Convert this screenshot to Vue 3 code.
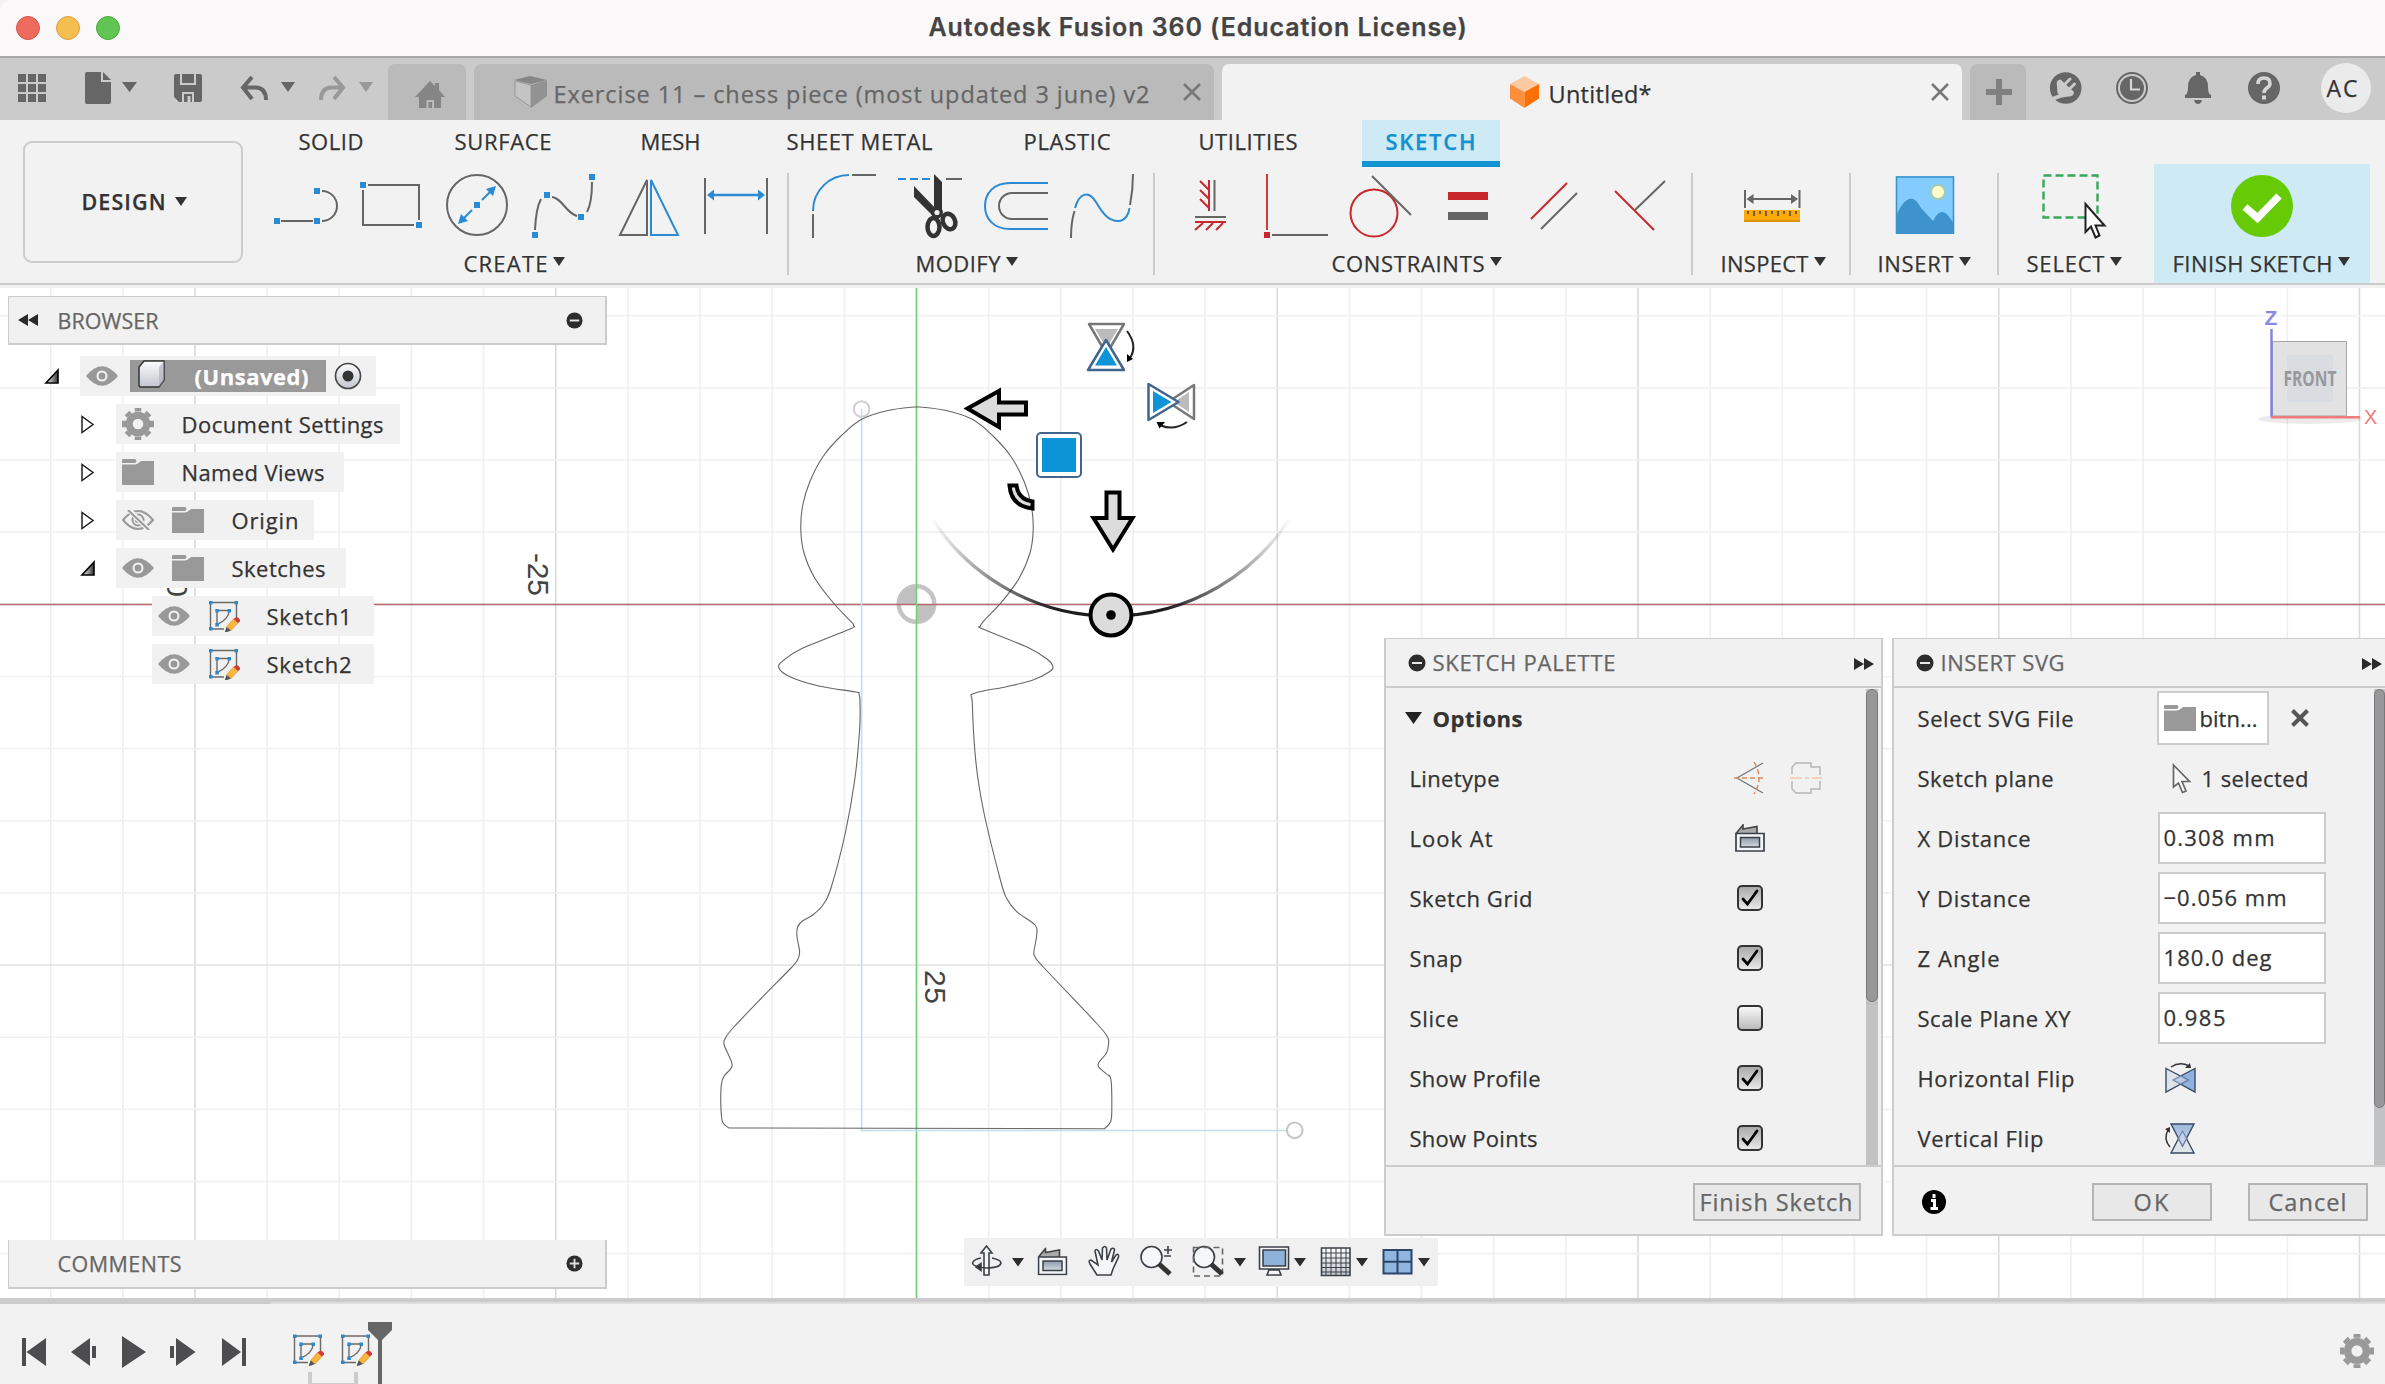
<script setup>
const vFit = {
  mounted(el, { value }) {
    el.style.letterSpacing = '0px'
    el.style.width = 'auto'
    const natural = el.getBoundingClientRect().width
    const gaps = Math.max(1, el.textContent.trim().length - 1)
    el.style.letterSpacing = (value + 2 - natural) / gaps + 'px'
    el.style.textIndent = '-1.5px'
    el.style.width = value + 'px'
  },
}

const ribbonTabs = [
  { t: 'SOLID', w: 63, gap: 10 },
  { t: 'SURFACE', w: 95, gap: 45 },
  { t: 'MESH', w: 58, gap: 43 },
  { t: 'SHEET METAL', w: 144, gap: 40 },
  { t: 'PLASTIC', w: 85, gap: 45 },
  { t: 'UTILITIES', w: 97, gap: 42 },
  { t: 'SKETCH', w: 88, gap: 41, on: true },
]

const G = '#666'
const B = '#2a8ad4'
const R = '#c8282c'
const sq = (x, y, c = B) => `<rect x="${x - 3}" y="${y - 3}" width="6" height="6" fill="${c}"/>`
const ln = (d, c = G, w = 2) => `<path d="${d}" fill="none" stroke="${c}" stroke-width="${w}"/>`

const groups = [
  {
    x0: 266, x1: 789, label: 'CREATE', lx: 465, lw: 82,
    icons: [
      { x: 266, w: 84, c: ln('M281 221H313M322 191A15 15 0 0 1 322 221') + sq(277, 221) + sq(317, 221) + sq(317, 191) },
      { x: 350, w: 84, c: ln('M368 185H419V220M414 225H363V190') + sq(363, 185) + sq(419, 225) },
      { x: 434, w: 84, c: `<circle cx="477" cy="205" r="30" fill="none" stroke="${G}" stroke-width="2"/>` + ln('M482 200L490 192M472 210L464 218', B) + `<path d="M496 186l-3 10-7-7zM458 224l3-10 7 7z" fill="${B}"/>` + sq(477, 205) },
      { x: 518, w: 90, c: ln('M535 230Q536 208 541 199M552 197C562 198 566 213 577 216M587 212Q592 203 592 182') + sq(547, 195) + sq(592, 177) + sq(581, 217) + sq(535, 235) },
      { x: 608, w: 82, c: ln('M647 180V235H620Z') + ln('M651 180V235H678Z', B) },
      { x: 690, w: 90, c: ln('M705 178V234M767 178V234') + ln('M712 195H760', B, 2.4) + `<path d="M707 195l7-5.500v11zM765 195l-7-5.500v11z" fill="${B}"/>` },
    ],
  },
  {
    x0: 789, x1: 1155, label: 'MODIFY', lx: 917, lw: 83,
    icons: [
      { x: 789, w: 98, c: ln('M813 211C813 190 830 175 849 175', B) + ln('M852 175H876M813 214V238') },
      { x: 887, w: 86, c: ln('M898 179H906M910 179H918M922 179H930', B) + ln('M946 179H962') + '<path d="M934 174l8 8v30l-8 2zM914 186v11l18 18 5-5z" fill="#333"/><ellipse cx="933.500" cy="227" rx="6" ry="9" fill="none" stroke="#333" stroke-width="4.500"/><ellipse cx="949" cy="221.500" rx="6" ry="8" transform="rotate(-25 949 221.500)" fill="none" stroke="#333" stroke-width="4.500"/><circle cx="937" cy="212.500" r="6" fill="#333"/><circle cx="937" cy="212.500" r="2.600" fill="#f2f2f2"/>' },
      { x: 973, w: 88, c: ln('M1048 183H1010C994 183 985 193 985 206S994 229 1010 229H1048', B) + ln('M1048 193H1012A13 13 0 0 0 1012 219H1048') },
      { x: 1061, w: 84, c: ln('M1071 238Q1071 222 1074.500 211M1130 205Q1133 190 1133 174') + ln('M1075 208C1079 194 1088 189 1096 202C1104 216 1110 221 1118 221C1126 221 1129 213 1129.500 208', B) },
    ],
  },
  {
    x0: 1155, x1: 1693, label: 'CONSTRAINTS', lx: 1333, lw: 151,
    icons: [
      { x: 1155, w: 90, c: ln('M1209 180V211M1200 181L1209 190M1200 190L1209 199M1200 199L1209 208M1195 222H1226M1203 223L1195 230M1213 223L1206 230M1223 223L1216 230', R) + ln('M1214.500 180V211M1195 217H1226') },
      { x: 1245, w: 94, c: ln('M1267 174V230', R, 1.8) + sq(1267, 235, R) + ln('M1272 235H1328') },
      { x: 1339, w: 92, c: `<circle cx="1374" cy="213" r="23.500" fill="none" stroke="${R}" stroke-width="2"/>` + ln('M1372 176L1411 215') },
      { x: 1431, w: 86, c: `<path d="M1448 192h40v8h-40z" fill="${R}"/><path d="M1448 212h40v8h-40z" fill="${G}"/>` },
      { x: 1517, w: 84, c: ln('M1531 219L1567 183', R) + ln('M1541 229L1577 193') },
      { x: 1601, w: 80, c: ln('M1615 191L1654 230', R) + ln('M1635 210L1665 181') },
    ],
  },
  {
    x0: 1693, x1: 1851, label: 'INSPECT', lx: 1722, lw: 86,
    icons: [{ x: 1693, w: 150, c: ln('M1745 190V208M1799.500 190V208M1752 199H1793') + `<path d="M1746.500 199l7-5v10zM1798 199l-7-5v10z" fill="${G}"/><path d="M1744 210h56v12h-56z" fill="#fca90b"/><path d="M1744 220h56v2h-56z" fill="#d9920a"/>` + ln('M1748 211V214M1754 211V216M1760 211V214M1766 211V216M1772 211V214M1778 211V216M1784 211V214M1790 211V216M1796 211V214', '#444', 1.5) }],
  },
  {
    x0: 1851, x1: 1999, label: 'INSERT', lx: 1879, lw: 74,
    icons: [{ x: 1851, w: 140, c: '<path d="M1896 176h58v58h-58z" fill="#83ccff"/><circle cx="1938" cy="192" r="7" fill="#ffffcf" stroke="#a9c9b0" stroke-width="2"/><path d="M1896 216C1904 198 1913 192 1921 208L1933 221C1940 207 1946 210 1954 224V234H1896Z" fill="#3e93cc"/><path d="M1896.500 177h57v56h-57z" fill="none" stroke="#3e93cc" stroke-width="1.600"/>' }],
  },
  {
    x0: 1999, x1: 2154, label: 'SELECT', lx: 2028, lw: 76,
    icons: [{ x: 1999, w: 140, c: '<path d="M2043.500 175.500h54v42h-54z" fill="none" stroke="#35a85a" stroke-width="2.400" stroke-dasharray="8 4"/><path d="M2085.500 204V232L2091 226.500L2095.500 237.500L2099.500 235.500L2095.500 225.500H2104.500Z" fill="#fff" stroke="#222" stroke-width="2"/>' }],
  },
  {
    x0: 2154, x1: 2370, label: 'FINISH SKETCH', lx: 2174, lw: 158, done: true,
    icons: [{ x: 2154, w: 216, c: '<circle cx="2262" cy="206" r="31" fill="#66cb06"/><path d="M2245 207L2257.500 218L2279 196" fill="none" stroke="#fff" stroke-width="7.500"/>' }],
  },
]

const tree = [
  { t: '(Unsaved)', w: 112, kind: 'root', open: true, row: 296 },
  { t: 'Document Settings', w: 200, kind: 'gear', row: 284 },
  { t: 'Named Views', w: 141, kind: 'folder', row: 228 },
  { t: 'Origin', w: 65, kind: 'folder', eye: 'eye-off', row: 198 },
  { t: 'Sketches', w: 92, kind: 'folder', eye: 'eye', open: true, row: 230 },
  { t: 'Sketch1', w: 83, kind: 'sketch', eye: 'eye', row: 222 },
  { t: 'Sketch2', w: 83, kind: 'sketch', eye: 'eye', row: 222 },
]

const options = [
  { t: 'Linetype', w: 88, kind: 'line' },
  { t: 'Look At', w: 81, kind: 'look' },
  { t: 'Sketch Grid', w: 121, on: true },
  { t: 'Snap', w: 51, on: true },
  { t: 'Slice', w: 47, on: false },
  { t: 'Show Profile', w: 129, on: true },
  { t: 'Show Points', w: 126, on: true },
]

const fields = [
  { t: 'Select SVG File', w: 154, kind: 'file' },
  { t: 'Sketch plane', w: 134, kind: 'plane' },
  { t: 'X Distance', w: 111, v: '0.308 mm', vw: 109 },
  { t: 'Y Distance', w: 111, v: '−0.056 mm', vw: 121 },
  { t: 'Z Angle', w: 80, v: '180.0 deg', vw: 106 },
  { t: 'Scale Plane XY', w: 151, v: '0.985', vw: 60 },
  { t: 'Horizontal Flip', w: 155, kind: 'hflip' },
  { t: 'Vertical Flip', w: 124, kind: 'vflip' },
]

const STEP = 72.15
const cols = Array.from({ length: 34 }, (_, i) => i - 12).map((k) => ({ p: 916.5 + k * STEP, major: k % 5 === 0 }))
const rows = Array.from({ length: 14 }, (_, i) => i - 4).map((k) => ({ p: 604.3 + k * STEP, major: k % 5 === 0 }))

function smooth(pts) {
  let d = ''
  for (let i = 0; i < pts.length - 1; i++) {
    const a = pts[i - 1] || pts[i]
    const b = pts[i]
    const c = pts[i + 1]
    const e = pts[i + 2] || c
    d += `C${b[0] + (c[0] - a[0]) / 6} ${b[1] + (c[1] - a[1]) / 6} ${c[0] - (e[0] - b[0]) / 6} ${c[1] - (e[1] - b[1]) / 6} ${c[0]} ${c[1]}`
  }
  return d
}
const head = [[917, 406.700], [888, 410.500], [861.600, 419.300], [841, 436], [822.900, 456.700], [809.800, 481.700], [802.600, 506], [800.800, 530], [804, 553], [814.700, 578]]
const left = [...head, [833, 602.5], [851, 621.700], [853.500, 625.500], [849.400, 629.300], [802.400, 648.300], [784, 660], [778.800, 667.700], [790, 676.700], [818.800, 686], [855.500, 692], [859, 694], [860, 703], [859.600, 730], [854.700, 780], [845.300, 833], [831, 888], [822.900, 905], [812.700, 915], [802.400, 921], [797.600, 927], [797, 936.700], [799.600, 951.700], [797.600, 960], [790, 969], [761.600, 998], [733, 1028], [725.500, 1038], [724.200, 1045], [732.200, 1065], [724.900, 1075], [721.600, 1083], [720.800, 1103], [722.400, 1121.700], [729, 1128]]
const right = [[1104.500, 1128.700], [1110.600, 1121.700], [1111.800, 1110], [1111, 1080], [1106.500, 1074], [1098, 1065], [1106.500, 1053], [1108.600, 1043], [1107.300, 1036.700], [1096.300, 1023], [1043.300, 967], [1035, 956.700], [1033.900, 951.700], [1036.700, 935], [1035, 925], [1016.700, 911.700], [1006.500, 898], [1000.400, 880], [984, 813], [976, 763], [972.300, 703], [974, 693.500], [1006.500, 686.700], [1033, 680], [1049.400, 671.700], [1052.900, 666.700], [1047, 659], [1027, 647], [983, 629], [980.300, 626], [986, 618.500], [1002, 601.700], ...head.map(([x, y]) => [1834 - x, y]).reverse()]
const pawn = `M917 406.700${smooth(left)}L1104.500 1128.700${smooth(right)}Z`
</script>

<template>
  <div class="app">
    <svg class="sprite" width="0" height="0">
      <defs>
        <linearGradient id="gBox" x2="0" y2="1"><stop offset="0" stop-color="#fdfdfd" /><stop offset="1" stop-color="#c2c6d0" /></linearGradient>
        <linearGradient id="gBlue" x2="0" y2="1"><stop offset="0" stop-color="#9db9dd" /><stop offset="1" stop-color="#c9d6ea" /></linearGradient>
        <linearGradient id="gDark" x2="0" y2="1"><stop offset="0" stop-color="#8e99aa" /><stop offset="1" stop-color="#d4d9e0" /></linearGradient>
        <linearGradient id="gTri" x2="1" y2="0"><stop offset="0" stop-color="#fff" /><stop offset="1" stop-color="#333" /></linearGradient>
        <linearGradient id="gArc" x1="933" x2="1289" y1="0" y2="0" gradientUnits="userSpaceOnUse">
          <stop offset="0" stop-color="#222" stop-opacity=".02" /><stop offset=".12" stop-color="#222" stop-opacity=".4" /><stop offset=".35" stop-color="#111" stop-opacity=".95" />
          <stop offset=".65" stop-color="#111" stop-opacity=".95" /><stop offset=".88" stop-color="#222" stop-opacity=".4" /><stop offset="1" stop-color="#222" stop-opacity=".02" />
        </linearGradient>
      </defs>
      <symbol id="eye" viewBox="0 0 32 20"><path d="M0 10Q16-9.500 32 10Q16 29.500 0 10Z" fill="#999" /><circle cx="16" cy="10" r="4.500" fill="none" stroke="#f2f2f2" stroke-width="2" /></symbol>
      <symbol id="eye-off" viewBox="0 0 32 20"><g fill="none" stroke="#999" stroke-width="2"><path d="M1 10Q16-8 31 10Q16 28 1 10Z" /><circle cx="16" cy="10" r="5.500" /><circle cx="16" cy="10" r="2" /><path d="M7 0L27 20" stroke="#f2f2f2" stroke-width="5" /><path d="M6 0L27 20" /></g></symbol>
      <symbol id="folder" viewBox="0 0 32 26"><path d="M0 1Q0 0 1.500 0H12.500Q14.500 0 14.500 2T12.500 4H0ZM0 5.500H13Q15 5.500 17 3.500T20 2H32V26H0Z" fill="#999" /></symbol>
      <symbol id="gear" viewBox="-16 -16 32 32"><path d="M0-12.500V-16M0 12.500V16M-12 0H-16M12 0H16M-8.500-8.500L-11-11M8.500-8.500L11-11M-8.500 8.500L-11 11M8.500 8.500L11 11" stroke="#999" stroke-width="6.500" /><circle r="8.800" fill="none" stroke="#999" stroke-width="7" /></symbol>
      <symbol id="sketch" viewBox="0 0 32 32"><path d="M2.500 2.500H28.500V19M16 29H2.500V2.500M9 10.500H21.500Q20 20 9 24.500Z" fill="none" stroke="#6a6a6a" stroke-width="1.400" /><path d="M1 1h3.500v3.500H1zM26.500 1H30v3.500h-3.500zM1 27h3.500v3.500H1zM7.300 9h3.500v3.500H7.300zM19.500 9H23v3.500h-3.500zM7.300 23h3.500v3.500H7.300z" fill="#2a8ad4" /><path d="M18.500 27L25.500 19L30 23L23 30.500Z" fill="#f6b73c" stroke="#e09a2a" stroke-width=".7" /><path d="M16.500 33L18.500 27L23 30.500Z" fill="#555" /><path d="M25.500 19Q28.500 16 31 18.500T30 23Z" fill="#d23b36" /></symbol>
      <symbol id="look" viewBox="0 0 30 28"><path d="M1 9.500L8 1V5L22 2.500V9.500" fill="#aaa" stroke="#444" stroke-width="1.600" /><path d="M1 9.500H29V27H1Z" fill="#f4f6fa" stroke="#3a4048" stroke-width="1.700" /><path d="M5.500 13.500H24.500V23H5.500Z" fill="url(#gDark)" stroke="#3a4048" stroke-width="1.500" /></symbol>
      <symbol id="ff" viewBox="0 0 20 12"><path d="M0 0L10 6L0 12ZM10 0L20 6L10 12Z" fill="#2b2b2b" /></symbol>
      <symbol id="tri" viewBox="0 0 12 9"><path d="M0 0H12L6 9Z" fill="currentColor" /></symbol>
      <symbol id="minus" viewBox="0 0 18 18"><circle cx="9" cy="9" r="8.500" fill="#2d2d2d" /><path d="M4 9H14" stroke="#e8e8e8" stroke-width="2" /></symbol>
      <symbol id="close" viewBox="0 0 18 18"><path d="M1 1L17 17M17 1L1 17" stroke="currentColor" stroke-width="2.500" /></symbol>
    </svg>

    <header class="title">
      <i class="light red"></i><i class="light amber"></i><i class="light green"></i>
      <b v-fit="536">Autodesk Fusion 360 (Education License)</b>
    </header>

    <nav class="docbar">
      <svg class="quick" width="388" height="62" viewBox="0 58 388 62">
        <path d="M18 74h8v8h-8zM28 74h8v8h-8zM38 74h8v8h-8zM18 84h8v8h-8zM28 84h8v8h-8zM38 84h8v8h-8zM18 94h8v8h-8zM28 94h8v8h-8zM38 94h8v8h-8z" fill="#666" />
        <path d="M87 72h14v10h10v20q0 2-2 2H87q-2 0-2-2V74q0-2 2-2zM103 72l8 8h-8z" fill="#666" />
        <path d="M122 82h15l-7.500 10zM281 82h14l-7 10z" fill="#666" /><path d="M359 82h14l-7 10z" fill="#999" />
        <path d="M176 74h24q2 0 2 2v24q0 2-2 2h-21l-5-5V76q0-2 2-2z" fill="#666" /><path d="M181 74v10h14V74M183 102v-9h10v9" fill="none" stroke="#cbcbcb" stroke-width="2" /><path d="M187.500 96h3v6h-3z" fill="#cbcbcb" />
        <path d="M252 77L243 87.500L252 99M244 87.500H256Q266 88 266 100" fill="none" stroke="#666" stroke-width="4" />
        <path d="M334 77L343 87.500L334 99M342 87.500H331Q321 88 321 100" fill="none" stroke="#999" stroke-width="4" />
      </svg>
      <div class="tab home"><svg width="32" height="28" viewBox="0 0 32 28"><path d="M16 0L21 5V2H25V9L31 16H27V27H20V19H12.500V27H5V16H1ZM14.500 21H18V27H14.500Z" fill="#858585" /></svg></div>
      <div class="tab doc">
        <svg width="33" height="32" viewBox="0 0 33 32"><path d="M0 4L16 0L33 4L17 8Z" fill="#868686" /><path d="M1 5L17 9V31L1 20Z" fill="#c4c4c4" stroke="#999" /><path d="M17 9L33 4V20L17 32Z" fill="#929292" /></svg>
        <span v-fit="594" class="doc-name">Exercise 11 – chess piece (most updated 3 june) v2</span>
        <svg class="x" width="18" height="18"><use href="#close" /></svg>
      </div>
      <div class="tab active">
        <svg width="29" height="32" viewBox="0 0 29 32"><path d="M14.500 0L29 8L14.500 16L0 8Z" fill="#fdc9a0" /><path d="M0 8L14.500 16V32L0 22.500Z" fill="#fb8f3c" /><path d="M29 8L14.500 16V32L29 22.500Z" fill="#fb6f05" /></svg>
        <span v-fit="101" class="doc-name">Untitled*</span>
        <svg class="x" width="18" height="18"><use href="#close" /></svg>
      </div>
      <div class="tab plus"><svg width="26" height="26" viewBox="0 0 26 26"><path d="M13 0V26M0 13H26" stroke="#808080" stroke-width="6" /></svg></div>
      <svg class="status" width="290" height="62" viewBox="2030 58 290 62">
        <circle cx="2065.700" cy="88" r="15.800" fill="#666" />
        <path d="M2064 94.500L2051 99.500" stroke="#cbcbcb" stroke-width="4" /><path d="M2057 86Q2055.500 80 2060.500 79.500L2074 92Q2073.500 97 2068 96.500L2062 97.500L2057.500 93Z" fill="#cbcbcb" /><path d="M2065 84L2070 79M2070 88.500L2074.500 84" stroke="#cbcbcb" stroke-width="3" stroke-linecap="round" />
        <circle cx="2132" cy="88" r="15" fill="none" stroke="#666" stroke-width="2" /><circle cx="2132" cy="88" r="12" fill="#666" /><path d="M2131 79V89.500H2140" fill="none" stroke="#d6d6d6" stroke-width="2.200" />
        <path d="M2196 72h4v3q8 2 8 12q0 7 3 8v3h-26v-3q3-1 3-8q0-10 8-12zM2194 100h8q-1 4-4 4t-4-4z" fill="#666" />
        <circle cx="2264" cy="88" r="16" fill="#666" /><path d="M2258 84Q2258 78 2264 78T2270 83.500Q2270 86 2267 88T2264 93" fill="none" stroke="#d6d6d6" stroke-width="3.600" /><path d="M2262 95.500h4v4h-4z" fill="#d6d6d6" />
      </svg>
      <div class="avatar"><span v-fit="29">AC</span></div>
    </nav>

    <section class="ribbon">
      <button class="workspace"><b v-fit="82">DESIGN</b><svg width="12" height="9"><use href="#tri" /></svg></button>
      <div class="tools">
        <div class="ribbon-tabs">
          <span v-for="r in ribbonTabs" :key="r.t" class="rtab" :class="{ on: r.on }" :style="{ marginLeft: r.gap + 'px' }"><span v-fit="r.w">{{ r.t }}</span></span>
        </div>
        <div class="groups">
          <div v-for="g in groups" :key="g.label" class="group" :class="{ done: g.done }" :style="{ width: g.x1 - g.x0 + 'px' }">
            <div class="icons">
              <svg v-for="i in g.icons" :key="i.x" :width="i.w" height="68" :viewBox="`${i.x} 172 ${i.w} 68`" v-html="i.c"></svg>
            </div>
            <div class="glabel" :style="{ marginLeft: g.lx - g.x0 + 'px' }"><span v-fit="g.lw">{{ g.label }}</span><svg width="12" height="9"><use href="#tri" /></svg></div>
          </div>
        </div>
      </div>
    </section>

    <main class="canvas">
      <svg class="scene" width="2385" height="1010" viewBox="0 288 2385 1010">
        <line v-for="c in cols" :key="'c' + c.p" :x1="c.p" :x2="c.p" y1="288" y2="1298" :stroke="c.major ? '#dadada' : '#efefef'" stroke-width="1.600" />
        <line v-for="r in rows" :key="'r' + r.p" x1="0" x2="2385" :y1="r.p" :y2="r.p" :stroke="r.major ? '#e2e2e2' : '#f1f1f1'" stroke-width="1.600" />
        <circle cx="916.500" cy="604" r="17.800" fill="#fff" stroke="#c4c4c4" stroke-width="4.500" /><path d="M916.500 604V586A18 18 0 0 0 898.500 604ZM916.500 604V622A18 18 0 0 0 934.500 604Z" fill="#c0c0c0" />
        <path d="M0 604.500H2385" stroke="#b5686c" stroke-width="1.300" />
        <path d="M916.500 288V1298" stroke="#6fd06f" stroke-width="1.500" />
        <path d="M861.600 409V1130.500H1287" fill="none" stroke="#bfe0ea" stroke-width="1.600" />
        <circle cx="861.600" cy="409" r="7.800" fill="none" stroke="#cfcfcf" stroke-width="2" /><circle cx="1294.700" cy="1130.300" r="7.800" fill="none" stroke="#c8c8c8" stroke-width="2.200" />
        <path :d="pawn" fill="none" stroke="#666" stroke-width="1.100" />
        <g class="ticks"><text transform="translate(528 553) rotate(90)" textLength="43">-25</text><text transform="translate(925 970) rotate(90)" textLength="34">25</text><text transform="translate(167 554) rotate(90)" textLength="43">-50</text></g>

        <path d="M933 520A213 213 0 0 0 1289 520" fill="none" stroke="url(#gArc)" stroke-width="3.200" />
        <g fill="#dcdcdc" stroke="#000" stroke-width="4">
          <path d="M967.500 408.500L999 391V402.500H1026V414.500H999V427Z" />
          <path d="M1106.500 492.500H1119.500V518H1132.500L1113 549.500L1093.500 518H1106.500Z" />
          <path d="M1009.500 485.500H1016.500Q1018 499 1032.500 501.500V508.500Q1011 506 1009.500 485.500Z" />
          <circle cx="1111" cy="615" r="20.500" />
        </g>
        <circle cx="1111" cy="615" r="4.800" />
        <rect x="1037" y="433" width="44" height="44" rx="4" fill="#fff" stroke="#41658c" stroke-width="2" /><path d="M1042 438h34v34h-34z" fill="#0d94d6" />
        <g stroke-linejoin="round">
          <path d="M1089 324H1124L1106.500 354Z" fill="#fff" stroke="#777" stroke-width="2.500" /><path d="M1095 329H1118L1106.500 348Z" fill="#bbb" />
          <path d="M1106 340L1124 370H1088Z" fill="#fff" stroke="#41658c" stroke-width="2.500" /><path d="M1106 347L1117 365.500H1095Z" fill="#0d94d6" />
          <path d="M1127 331Q1138 346 1130 358" fill="none" stroke="#222" stroke-width="2" /><path d="M1127 362V354L1133 359Z" />
          <path d="M1194 385V419L1168 402Z" fill="#fff" stroke="#777" stroke-width="2.500" /><path d="M1189 392V412L1174 402Z" fill="#bbb" />
          <path d="M1148.500 384V420L1178.500 402Z" fill="#fff" stroke="#41658c" stroke-width="2.500" /><path d="M1153 391V413L1171.500 402Z" fill="#0d94d6" />
          <path d="M1187 422Q1174 431 1161 425.500" fill="none" stroke="#222" stroke-width="2" /><path d="M1156.500 422H1165L1159.500 428.500Z" />
        </g>

        <ellipse cx="2310" cy="419" rx="52" ry="5" fill="#000" opacity=".08" />
        <path d="M2272.500 341.500H2346.500V416H2272.500Z" fill="#e2e2e2" stroke="#a8a8a8" /><path d="M2287 355H2333V402H2287Z" fill="#d9dce0" />
        <g class="cube"><text x="2283.500" y="386" textLength="53" lengthAdjust="spacingAndGlyphs">FRONT</text><text class="z" x="2264.500" y="325">Z</text><text class="xx" x="2364" y="424">X</text></g>
        <path d="M2271.500 329V417" stroke="#8484de" stroke-width="2.500" /><path d="M2271 417.300H2360" stroke="#f07b7b" stroke-width="2.500" />
      </svg>

      <aside class="browser">
        <div class="bar">
          <svg class="rew" width="20" height="12"><use href="#ff" /></svg><span v-fit="99">BROWSER</span><svg class="end" width="17" height="17"><use href="#minus" /></svg>
        </div>
        <ul>
          <li v-for="n in tree" :key="n.t" :class="n.kind">
            <span class="twist">
              <svg v-if="n.open" width="14" height="15" viewBox="0 0 14 15"><path d="M13 1V14H1Z" fill="url(#gTri)" stroke="#000" stroke-width="1.600" /></svg>
              <svg v-else-if="n.kind !== 'sketch'" width="13" height="19" viewBox="0 0 13 19"><path d="M1 1.500V17.500L12 9.500Z" fill="#fff" stroke="#222" stroke-width="1.500" /></svg>
            </span>
            <div class="row" :style="{ width: n.row + 'px' }">
              <template v-if="n.kind === 'root'">
                <svg width="32" height="20"><use href="#eye" /></svg>
                <span class="hot"><svg width="28" height="28" viewBox="0 0 28 28"><path d="M1 7L6 1H26V20L21 27H3Q1 27 1 25Z" fill="url(#gBox)" stroke="#333" stroke-width="1.500" /><path d="M21 27V7L26 1V20Z" fill="#aab" opacity=".6" /></svg><b v-fit="n.w">{{ n.t }}</b></span>
                <svg class="radio" width="28" height="28" viewBox="0 0 28 28"><circle cx="14" cy="14" r="12.500" fill="url(#gBox)" stroke="#444" stroke-width="1.600" /><circle cx="14" cy="14" r="5.500" fill="#333" /></svg>
              </template>
              <template v-else>
                <svg v-if="n.eye" class="eye" width="32" height="20"><use :href="'#' + n.eye" /></svg>
                <svg v-if="n.kind === 'folder'" width="32" height="26"><use href="#folder" /></svg>
                <svg v-else width="32" height="32"><use :href="'#' + n.kind" /></svg>
                <span v-fit="n.w" class="name">{{ n.t }}</span>
              </template>
            </div>
          </li>
        </ul>
      </aside>

      <div class="bar comments"><span v-fit="122">COMMENTS</span><svg class="end" width="17" height="17" viewBox="0 0 18 18"><circle cx="9" cy="9" r="8.500" fill="#2d2d2d" /><path d="M4 9H14M9 4V14" stroke="#ddd" stroke-width="2" /></svg></div>

      <svg class="navbar" width="474" height="48" viewBox="964 1238 474 48">
        <g stroke="#3c4046" stroke-width="1.600" fill="#f6f7f9">
          <path d="M984 1275V1253H981L986.500 1246L992 1253H989V1275Z" /><path d="M992 1258Q1001 1260 1001 1263Q1000 1268 986 1268Q973 1267 972.500 1263Q974 1259 981 1258" fill="none" /><path d="M976 1267L981 1263.500V1270.500Z" fill="#333" />
          <path d="M1097 1275L1090 1264Q1088 1260 1091 1260L1098 1265L1095 1251Q1096 1248 1098.500 1251L1102 1260L1102.500 1248Q1105 1245 1106.500 1248L1107 1260L1111 1249Q1114 1247 1114.500 1250L1111.500 1262L1116 1255Q1119 1253 1118.500 1257L1113 1269L1111 1275Z" />
          <circle cx="1151.500" cy="1257" r="10.500" /><circle cx="1204" cy="1257" r="10.500" />
          <path d="M1168 1246V1254M1164 1250H1172M1164 1256H1171" fill="none" />
          <path d="M1193.500 1247.500H1222.500V1276H1193.500Z" fill="none" stroke="#666" stroke-dasharray="6 4" />
          <path d="M1259.500 1247H1288.500V1269H1259.500ZM1269 1270H1279L1281 1275H1267Z" /><path d="M1263 1250H1285.500V1266H1263Z" fill="#8fb2db" />
          <path d="M1321.500 1248H1350V1275.500H1321.500Z" fill="url(#gBox)" /><path d="M1326 1248V1275M1331 1248V1275M1336 1248V1275M1341 1248V1275M1346 1248V1275M1322 1253H1350M1322 1258H1350M1322 1263H1350M1322 1267.500H1350M1322 1272H1350" stroke-width="1" />
          <path d="M1383.500 1250H1411.500V1273.500H1383.500ZM1397.500 1250V1273.500M1383.500 1261.800H1411.500" fill="#8fb5e0" stroke="#2b4468" stroke-width="2" />
        </g>
        <path d="M1159 1264L1170 1274M1211 1264L1222 1274" stroke="#333" stroke-width="5" />
        <use href="#look" x="1037.500" y="1247.500" width="30" height="28" />
        <g fill="#2d2d2d"><path d="M1012 1258h12l-6 8.500zM1234 1258h12l-6 8.500zM1294 1258h12l-6 8.500zM1356 1258h12l-6 8.500zM1418 1258h12l-6 8.500z" /></g>
      </svg>

      <aside class="palette sketch-palette">
        <div class="phead"><svg width="18" height="18"><use href="#minus" /></svg><span v-fit="181">SKETCH PALETTE</span><svg class="ff" width="20" height="12"><use href="#ff" /></svg></div>
        <div class="pbody">
          <div class="prow head"><svg width="17" height="12" viewBox="0 0 17 12"><path d="M0 0H17L8.500 12Z" fill="#222" /></svg><b v-fit="88">Options</b></div>
          <div v-for="o in options" :key="o.t" class="prow">
            <span v-fit="o.w" class="lab">{{ o.t }}</span>
            <span class="ctl">
              <template v-if="o.kind === 'line'">
                <svg width="32" height="32" viewBox="0 0 32 32"><path d="M29 1L3 16L29 31" fill="none" stroke="#777" stroke-width="1.300" /><path d="M0 16H32M20 0Q30 16 20 32" fill="none" stroke="#d98a5c" stroke-width="1.400" stroke-dasharray="5 3" /></svg>
                <svg class="second" width="32" height="32" viewBox="0 0 32 32"><path d="M2 12V5L6 1H21V5H30V13M2 19V27L6 31H21V27H30V19" fill="none" stroke="#b5b5b5" stroke-width="1.400" /><path d="M0 16H32" stroke="#efc9ae" stroke-width="1.400" stroke-dasharray="12 3 4 3" /></svg>
              </template>
              <svg v-else-if="o.kind === 'look'" class="lk" width="30" height="28"><use href="#look" /></svg>
              <i v-else class="check" :class="{ on: o.on }"><svg v-if="o.on" width="22" height="22" viewBox="0 0 22 22"><path d="M4 12L8.500 17L18 4" fill="none" stroke="#000" stroke-width="2.800" stroke-linecap="round" /></svg></i>
            </span>
          </div>
          <div class="scroll"><i></i></div>
        </div>
        <div class="pfoot"><button class="fin"><span v-fit="151">Finish Sketch</span></button></div>
      </aside>

      <aside class="palette insert-svg">
        <div class="phead"><svg width="18" height="18"><use href="#minus" /></svg><span v-fit="122">INSERT SVG</span><svg class="ff" width="20" height="12"><use href="#ff" /></svg></div>
        <div class="pbody">
          <div v-for="f in fields" :key="f.t" class="prow">
            <span v-fit="f.w" class="lab">{{ f.t }}</span>
            <span v-if="f.v" class="input"><span v-fit="f.vw">{{ f.v }}</span></span>
            <span v-else class="extra" :class="f.kind">
              <template v-if="f.kind === 'file'"><span class="filebox"><svg width="32" height="26"><use href="#folder" /></svg><span v-fit="56" class="bit">bitn...</span></span><svg class="clear" width="18" height="18" viewBox="0 0 18 18"><path d="M1.500 1.500L16.500 16.500M16.500 1.500L1.500 16.500" stroke="#555" stroke-width="4" /></svg></template>
              <template v-else-if="f.kind === 'plane'"><svg width="20" height="31" viewBox="0 0 20 31"><path d="M1.500 2V24L6.500 20L10.500 29.500L14 28L10 18.500H17.500Z" fill="#f8f8f8" stroke="#666" stroke-width="1.700" /></svg><span v-fit="105">1 selected</span></template>
              <svg v-else-if="f.kind === 'hflip'" width="31" height="31" viewBox="0 0 31 31"><path d="M30 5.500L8 17L30 29Z" fill="#8fb2e0" stroke="#394a63" stroke-width="1.400" /><path d="M1 5.500L23 17L1 29Z" fill="#dfe3ea" stroke="#394a63" stroke-width="1.400" /><path d="M8 17L15.500 13L23 17L15.500 21Z" fill="#b8cbe8" stroke="#6f88ad" stroke-width="1.200" /><path d="M6 4Q15-2 24 3" fill="none" stroke="#333" stroke-width="1.500" /><path d="M26 5L20 5L25 0Z" fill="#333" /></svg>
              <svg v-else width="31" height="31" viewBox="0 0 31 31"><path d="M6 30H29L17.500 8Z" fill="#dfe3ea" stroke="#394a63" stroke-width="1.400" /><path d="M6 1H29L17.500 23Z" fill="url(#gBlue)" stroke="#394a63" stroke-width="1.400" /><path d="M17.500 8L21.500 15.500L17.500 23L13.500 15.500Z" fill="#c4d3eb" stroke="#6f88ad" stroke-width="1.200" /><path d="M5 24Q-2 16 3 7" fill="none" stroke="#333" stroke-width="1.500" /><path d="M5 4V10L0 6Z" fill="#333" /></svg>
            </span>
          </div>
          <div class="scroll"><i></i></div>
        </div>
        <div class="pfoot">
          <svg width="24" height="24" viewBox="0 0 24 24"><circle cx="12" cy="12" r="12" /><path d="M12 4v4M9 10.500h3.500V18M8.500 18.500h7.500" stroke="#fff" stroke-width="3" fill="none" /></svg>
          <button class="ok"><span v-fit="33">OK</span></button><button class="cancel"><span v-fit="76">Cancel</span></button>
        </div>
      </aside>
    </main>

    <footer class="timeline">
      <svg class="play" width="270" height="40" viewBox="0 1331 270 40"><path d="M22 1338h4v28h-4zM46 1338v28L26.500 1352zM90 1338v28L71 1352zM92 1346h4v12h-4zM122 1336L146 1352L122 1368zM170 1346h4v12h-4zM176 1338v28L195.500 1352zM222 1338v28L241 1352zM242 1338h4v28h-4z" fill="#4d4d4f" /></svg>
      <div class="features"><svg width="32" height="33"><use href="#sketch" /></svg><svg width="32" height="33"><use href="#sketch" /></svg><i class="bracket"></i><svg class="marker" width="24" height="62" viewBox="0 0 24 62"><path d="M0 0H24V8L14 18V62H10V18L0 8Z" fill="#666" /></svg></div>
      <svg class="cog" width="34" height="34"><use href="#gear" /></svg>
    </footer>
  </div>
</template>

<style>
body { margin: 0; overflow: hidden; }
</style>

<style scoped>
.app { width: 2385px; height: 1384px; display: flex; flex-direction: column; background: #f2f2f2; color: #333; font-family: "Open Sans", "Noto Sans", sans-serif; font-size: 22px; overflow: hidden; white-space: nowrap; -webkit-text-stroke: 0.25px currentColor; }
.app * { box-sizing: border-box; }
.sprite { position: absolute; }
svg { display: block; flex: none; overflow: visible; }
span, b { flex: none; }
button { font: inherit; color: inherit; padding: 0; margin: 0; text-align: left; }
ul { list-style: none; margin: 0; padding: 0; }

.title { height: 58px; flex: none; display: flex; align-items: center; background: #faf8f9; border-bottom: 2px solid #a9a9a9; padding-left: 16px; border-radius: 12px 0 0; }
.light { width: 24px; height: 24px; border-radius: 50%; margin-right: 16px; }
.red { background: #ec6a5e; border: 1px solid #d0564c; }
.amber { background: #f4bf4f; border: 1px solid #d6a243; }
.green { background: #61c554; border: 1px solid #50a73f; }
.title b { margin-left: 794px; font-family: Inter, "Liberation Sans", sans-serif; font-weight: 600; font-size: 25px; color: #444; position: relative; top: -1px; }

.docbar { height: 62px; flex: none; display: flex; align-items: flex-end; background: #cbcbcb; }
.tab { height: 56px; border-radius: 7px 7px 0 0; background: #bababa; display: flex; align-items: center; margin-right: 8px; flex: none; }
.home { width: 78px; padding: 5px 0 0 26px; }
.doc { width: 740px; padding-left: 40px; color: #666; }
.doc-name { font-size: 23.500px; margin-left: 8px; padding-top: 3px; }
.active { width: 740px; background: #f2f2f2; padding-left: 288px; }
.active .doc-name { margin-left: 11px; }
.x { margin-left: 34px; color: #777; }
.active .x { margin-left: 280px; }
.plus { width: 56px; padding-left: 16px; margin-right: 4px; }
.avatar { width: 50px; height: 50px; border-radius: 50%; background: #ebebeb; margin: 0 0 7px 1px; padding: 10px 0 0 7px; line-height: 30px; font-size: 23px; }
.avatar span { display: inline-block; }

.ribbon { height: 168px; flex: none; display: flex; background: linear-gradient(#ccc, #ccc) 0 163px / 100% 2px no-repeat, #f2f2f2; }
.workspace { width: 220px; height: 122px; margin: 21px 23px 0 23px; border: 2px solid #ccc; border-radius: 9px; background: none; display: flex; align-items: center; padding-left: 58px; padding-bottom: 2px; flex: none; font-size: 21.500px; }
.workspace b { font-weight: 600; margin-right: 10px; }
.ribbon-tabs { height: 44px; display: flex; }
.rtab { height: 47px; padding: 5px 24px 0; line-height: 32px; }
.rtab span { display: block; }
.on.rtab { background: #cdeaf5; border-bottom: 6px solid #1293d2; color: #1390cf; font-weight: 600; padding: 5px 25px 0; }
.groups { display: flex; height: 119px; }
.group { position: relative; padding-top: 8px; flex: none; }
.group:not(.done):not(:nth-last-child(2))::after { content: ""; position: absolute; right: 0; top: 9px; width: 2px; height: 102px; background: #ccc; }
.done { background: #cdeaf5; }
.icons { display: flex; height: 68px; }
.glabel { display: flex; align-items: center; height: 30px; margin-top: 8px; }
.glabel svg { margin: -3px 0 0 6px; }

.canvas { position: relative; height: 1010px; flex: none; background: #fff; overflow: hidden; }
.scene { position: absolute; inset: 0; }
.ticks { font: 30px "Liberation Sans", sans-serif; fill: #444; }
.cube { font: 700 20.500px "Open Sans", sans-serif; fill: #96999e; -webkit-text-stroke: 0; }
.z, .xx { font: 600 21px "Liberation Sans", sans-serif; fill: #8a8ae2; }
.xx { fill: #f07b7b; font-weight: 400; font-size: 20px; }

.browser { position: absolute; left: 8px; top: 8px; width: 599px; }
.bar { height: 49px; background: #f1f1f1; border: 1px solid #ccc; border-width: 1px 2px 2px 1px; display: flex; align-items: center; color: #666; font-size: 21.500px; }
.rew { transform: scaleX(-1); margin: 0 21px 0 9px; }
.end { margin: 0 22px 0 auto; }
.bar.comments { position: absolute; left: 8px; top: 952px; width: 599px; padding-left: 50px; border-top: 0; }
.comments .end { margin-right: 22px; }
.browser ul { padding-top: 11px; }
li { height: 48px; display: flex; }
.twist { width: 72px; height: 40px; display: flex; align-items: center; flex: none; padding-left: 37px; }
li:not(.root) .twist { width: 108px; padding-left: 73px; }
li.sketch .twist { width: 144px; }
.row { height: 40px; background: #f1f1f1; display: flex; align-items: center; padding-left: 6px; flex: none; }
.eye { margin-right: 18px; }
.name { margin-left: 29px; }
.sketch .name { margin-left: 28px; }
.hot { height: 32px; width: 196px; margin-left: 12px; background: #999; color: #fff; display: flex; align-items: center; padding-left: 8px; }
.hot svg { margin-top: -4px; }
.hot b { margin-left: 30px; font-weight: 700; }
.radio { margin-left: 8px; }
.navbar { position: absolute; left: 964px; top: 950px; background: #f0f0f0; }

.palette { position: absolute; top: 350px; height: 598px; background: #f1f1f1; border: 2px solid #ccc; border-width: 1px 2px 2px; display: flex; flex-direction: column; }
.sketch-palette { left: 1384px; width: 499px; }
.insert-svg { left: 1892px; width: 493px; border-right: 0; }
.phead { height: 49px; border-bottom: 2px solid #ccc; display: flex; align-items: center; padding: 0 7px 0 22px; color: #666; flex: none; font-size: 22px; }
.phead span { margin: -2px 0 0 8px; }
.phead svg:first-child { margin-top: 1px; }
.phead .ff { margin-left: auto; margin-top: 3px; }
.insert-svg .phead { padding-right: 3px; }
.pbody { position: relative; height: 479px; border-bottom: 2px solid #ccc; flex: none; }
.prow { height: 60px; display: flex; align-items: center; padding-left: 25px; }
.prow.head { padding-left: 19px; }
.head b { margin-left: 12px; font-weight: 700; }
.lab { display: block; }
.ctl { position: absolute; left: 348px; display: flex; }
.second { margin-left: 24px; }
.lk { margin-left: 1px; }
.check { width: 26px; height: 26px; border: 2px solid #333; border-radius: 5px; background: linear-gradient(#f8f8f8, #bbb); margin-left: 3px; display: block; }
.check.on { background: linear-gradient(#a9a9a9, #e9e9e9); }
.scroll { position: absolute; top: 1px; right: 3px; width: 12px; bottom: 0; background: #c1c2c4; }
.insert-svg .scroll { right: 0; width: 11px; }
.scroll i { display: block; height: 313px; background: #98989a; border: 1px solid #777; border-radius: 6px; }
.insert-svg .scroll i { height: 419px; }
.pfoot { height: 67px; display: flex; align-items: center; padding-top: 3px; }
.pfoot button { height: 38px; border: 2px solid #b5b5b5; background: #e8e8e8; color: #666; font-size: 23.500px; display: flex; align-items: center; flex: none; }
.fin { width: 168px; margin-left: 307px; padding-left: 6px; }
.pfoot > svg { margin-left: 28px; }
.pfoot .ok { width: 120px; margin-left: 146px; padding-left: 41px; }
.pfoot .cancel { width: 120px; margin-left: 36px; padding-left: 20px; }
.input { position: absolute; left: 264px; width: 168px; height: 52px; background: #fff; border: 2px solid #ccc; display: flex; align-items: center; padding: 0 0 2px 5px; }
.extra { position: absolute; left: 271px; display: flex; align-items: center; }
.file { left: 263px; }
.filebox { width: 112px; height: 54px; background: #fff; border: 2px solid #ccc; display: flex; align-items: center; padding-left: 5px; }
.bit { margin-left: 5px; }
.clear { margin-left: 22px; }
.plane { left: 278px; }
.plane span { margin-left: 11px; }

.timeline { height: 86px; flex: none; display: flex; background: linear-gradient(90deg, #cbcbcb 270px, #dedede 270px) 0 0 / 100% 6px no-repeat, #f2f2f2; position: relative; }
.timeline::before { content: ""; position: absolute; left: 0; right: 0; top: 0; height: 4px; background: #cbcbcb; }
.play { margin-top: 33px; }
.features { position: relative; display: flex; gap: 16px; margin: 35px 0 0 22px; }
.bracket { position: absolute; left: 16px; top: 39px; width: 50px; height: 13px; border: 4px solid #ccc; border-top: 0; border-bottom-width: 2px; }
.marker { position: absolute; left: 76px; top: -11px; }
.cog { margin: 36px 11px 0 auto; }
</style>
